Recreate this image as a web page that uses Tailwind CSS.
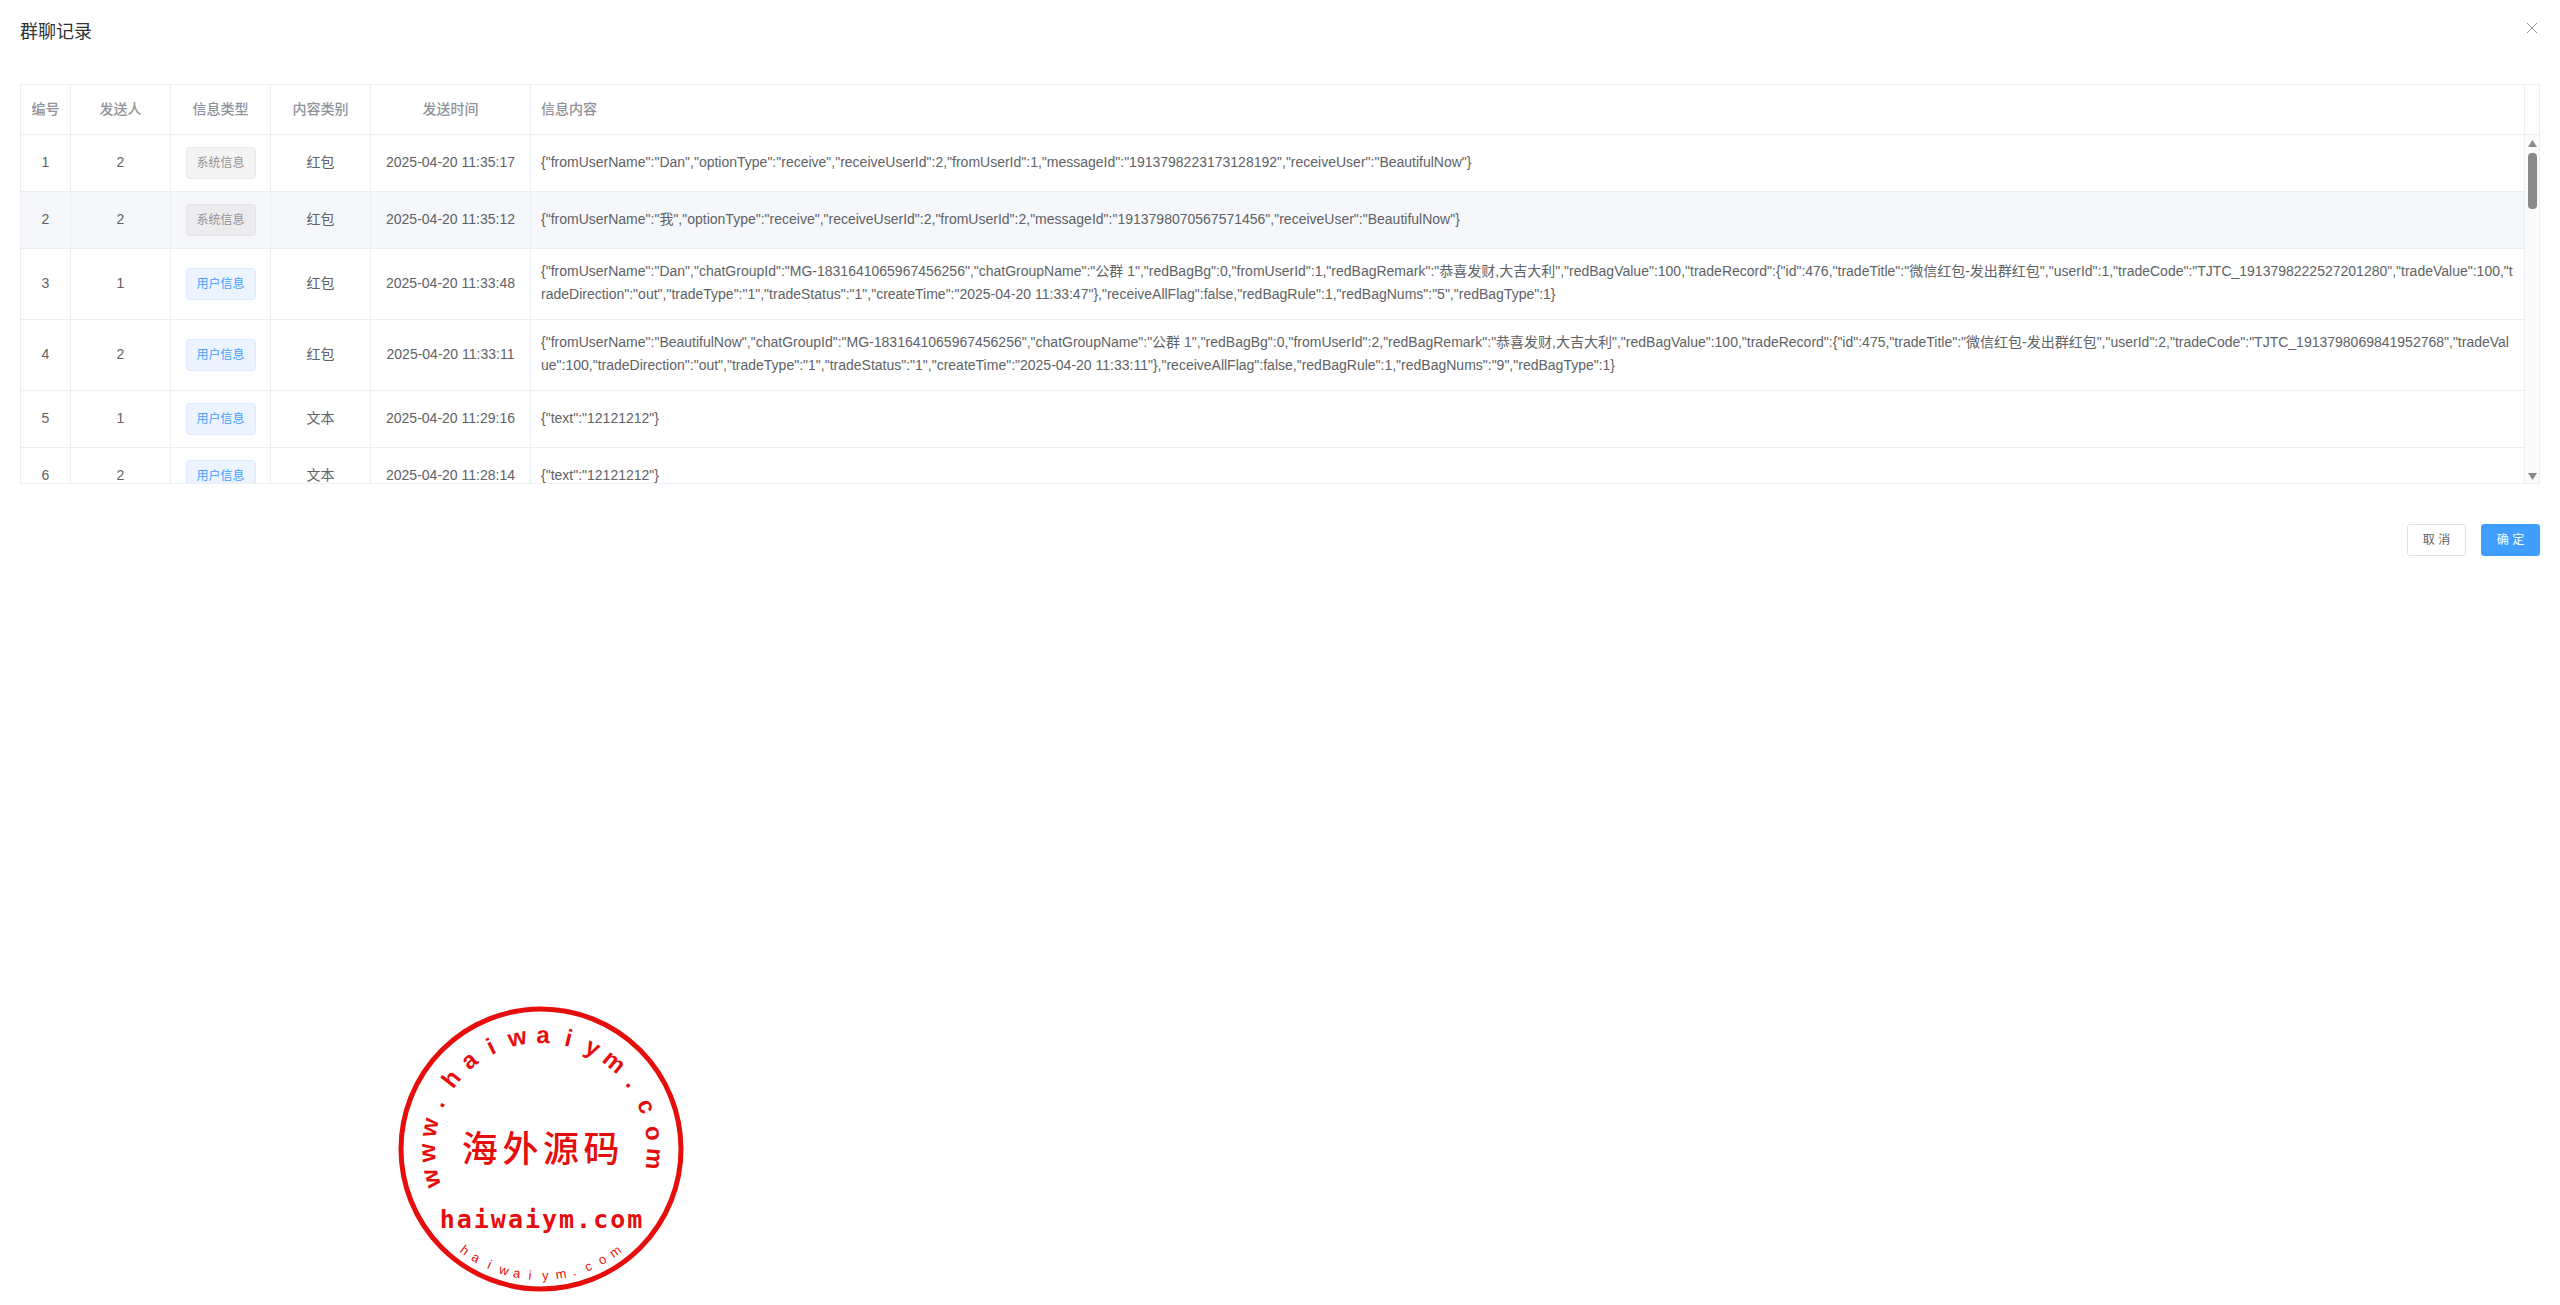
<!DOCTYPE html>
<html lang="zh-CN">
<head>
<meta charset="utf-8">
<title>群聊记录</title>
<script src="https://cdn.jsdelivr.net/npm/@tailwindcss/browser@4"></script>
</head>
<body class="relative h-[1305px] overflow-hidden bg-white text-[14px] text-[#606266] font-['Liberation_Sans','Noto_Sans_CJK_SC',sans-serif]">
  <!-- dialog header -->
  <div class="flex items-center justify-between h-[64px] pl-[20px] pr-[20px]">
    <h2 class="text-[18px] leading-[24px] text-[#303133]">群聊记录</h2>
    <svg class="w-[12px] h-[12px] mt-[-8px] mr-[2px]" viewBox="0 0 12 12" fill="none" stroke="#909399" stroke-width="1"><path d="M1 1 L11 11 M11 1 L1 11"/></svg>
  </div>

  <!-- table -->
  <div class="mt-[20px] mx-[20px] h-[400px] border border-[#ebeef5] overflow-hidden flex">
    <div class="w-[2503px] shrink-0">
      <div class="flex h-[50px] border-b border-[#ebeef5] font-medium text-[#909399] items-stretch">
        <div class="w-[50px] border-r border-[#ebeef5] flex items-center justify-center">编号</div>
        <div class="w-[100px] border-r border-[#ebeef5] flex items-center justify-center">发送人</div>
        <div class="w-[100px] border-r border-[#ebeef5] flex items-center justify-center">信息类型</div>
        <div class="w-[100px] border-r border-[#ebeef5] flex items-center justify-center">内容类别</div>
        <div class="w-[160px] border-r border-[#ebeef5] flex items-center justify-center">发送时间</div>
        <div class="flex-1 flex items-center px-[10px]">信息内容</div>
      </div>

      <div class="flex items-stretch border-b border-[#ebeef5]">
        <div class="w-[50px] border-r border-[#ebeef5] flex items-center justify-center pb-[2px]">1</div>
        <div class="w-[100px] border-r border-[#ebeef5] flex items-center justify-center pb-[2px]">2</div>
        <div class="w-[100px] border-r border-[#ebeef5] flex items-center justify-center py-[12px]"><span class="w-[70px] h-[32px] flex items-center justify-center text-[12px] rounded-[4px] border border-[#e9e9eb] bg-[#f4f4f5] text-[#909399]">系统信息</span></div>
        <div class="w-[100px] border-r border-[#ebeef5] flex items-center justify-center pb-[2px]">红包</div>
        <div class="w-[160px] border-r border-[#ebeef5] flex items-center justify-center pb-[2px]">2025-04-20 11:35:17</div>
        <div class="flex-1 flex items-center px-[10px] pb-[2px] leading-[23px] break-all">{"fromUserName":"Dan","optionType":"receive","receiveUserId":2,"fromUserId":1,"messageId":"1913798223173128192","receiveUser":"BeautifulNow"}</div>
      </div>

      <div class="flex items-stretch border-b border-[#ebeef5] bg-[#f5f7fa]">
        <div class="w-[50px] border-r border-[#ebeef5] flex items-center justify-center pb-[2px]">2</div>
        <div class="w-[100px] border-r border-[#ebeef5] flex items-center justify-center pb-[2px]">2</div>
        <div class="w-[100px] border-r border-[#ebeef5] flex items-center justify-center py-[12px]"><span class="w-[70px] h-[32px] flex items-center justify-center text-[12px] rounded-[4px] border border-[#e4e4e6] bg-[#ececee] text-[#909399]">系统信息</span></div>
        <div class="w-[100px] border-r border-[#ebeef5] flex items-center justify-center pb-[2px]">红包</div>
        <div class="w-[160px] border-r border-[#ebeef5] flex items-center justify-center pb-[2px]">2025-04-20 11:35:12</div>
        <div class="flex-1 flex items-center px-[10px] pb-[2px] leading-[23px] break-all">{"fromUserName":"我","optionType":"receive","receiveUserId":2,"fromUserId":2,"messageId":"1913798070567571456","receiveUser":"BeautifulNow"}</div>
      </div>

      <div class="flex items-stretch border-b border-[#ebeef5]">
        <div class="w-[50px] border-r border-[#ebeef5] flex items-center justify-center pb-[2px]">3</div>
        <div class="w-[100px] border-r border-[#ebeef5] flex items-center justify-center pb-[2px]">1</div>
        <div class="w-[100px] border-r border-[#ebeef5] flex items-center justify-center"><span class="w-[70px] h-[32px] flex items-center justify-center text-[12px] rounded-[4px] border border-[#d9ecff] bg-[#ecf5ff] text-[#409eff]">用户信息</span></div>
        <div class="w-[100px] border-r border-[#ebeef5] flex items-center justify-center pb-[2px]">红包</div>
        <div class="w-[160px] border-r border-[#ebeef5] flex items-center justify-center pb-[2px]">2025-04-20 11:33:48</div>
        <div class="flex-1 flex items-center px-[10px] pt-[11px] pb-[13px] leading-[23px] break-all">{"fromUserName":"Dan","chatGroupId":"MG-1831641065967456256","chatGroupName":"公群 1","redBagBg":0,"fromUserId":1,"redBagRemark":"恭喜发财,大吉大利","redBagValue":100,"tradeRecord":{"id":476,"tradeTitle":"微信红包-发出群红包","userId":1,"tradeCode":"TJTC_1913798222527201280","tradeValue":100,"tradeDirection":"out","tradeType":"1","tradeStatus":"1","createTime":"2025-04-20 11:33:47"},"receiveAllFlag":false,"redBagRule":1,"redBagNums":"5","redBagType":1}</div>
      </div>

      <div class="flex items-stretch border-b border-[#ebeef5]">
        <div class="w-[50px] border-r border-[#ebeef5] flex items-center justify-center pb-[2px]">4</div>
        <div class="w-[100px] border-r border-[#ebeef5] flex items-center justify-center pb-[2px]">2</div>
        <div class="w-[100px] border-r border-[#ebeef5] flex items-center justify-center"><span class="w-[70px] h-[32px] flex items-center justify-center text-[12px] rounded-[4px] border border-[#d9ecff] bg-[#ecf5ff] text-[#409eff]">用户信息</span></div>
        <div class="w-[100px] border-r border-[#ebeef5] flex items-center justify-center pb-[2px]">红包</div>
        <div class="w-[160px] border-r border-[#ebeef5] flex items-center justify-center pb-[2px]">2025-04-20 11:33:11</div>
        <div class="flex-1 flex items-center px-[10px] pt-[11px] pb-[13px] leading-[23px] break-all">{"fromUserName":"BeautifulNow","chatGroupId":"MG-1831641065967456256","chatGroupName":"公群 1","redBagBg":0,"fromUserId":2,"redBagRemark":"恭喜发财,大吉大利","redBagValue":100,"tradeRecord":{"id":475,"tradeTitle":"微信红包-发出群红包","userId":2,"tradeCode":"TJTC_1913798069841952768","tradeValue":100,"tradeDirection":"out","tradeType":"1","tradeStatus":"1","createTime":"2025-04-20 11:33:11"},"receiveAllFlag":false,"redBagRule":1,"redBagNums":"9","redBagType":1}</div>
      </div>

      <div class="flex items-stretch border-b border-[#ebeef5]">
        <div class="w-[50px] border-r border-[#ebeef5] flex items-center justify-center pb-[2px]">5</div>
        <div class="w-[100px] border-r border-[#ebeef5] flex items-center justify-center pb-[2px]">1</div>
        <div class="w-[100px] border-r border-[#ebeef5] flex items-center justify-center py-[12px]"><span class="w-[70px] h-[32px] flex items-center justify-center text-[12px] rounded-[4px] border border-[#d9ecff] bg-[#ecf5ff] text-[#409eff]">用户信息</span></div>
        <div class="w-[100px] border-r border-[#ebeef5] flex items-center justify-center pb-[2px]">文本</div>
        <div class="w-[160px] border-r border-[#ebeef5] flex items-center justify-center pb-[2px]">2025-04-20 11:29:16</div>
        <div class="flex-1 flex items-center px-[10px] pb-[2px] leading-[23px] break-all">{"text":"12121212"}</div>
      </div>

      <div class="flex items-stretch border-b border-[#ebeef5]">
        <div class="w-[50px] border-r border-[#ebeef5] flex items-center justify-center pb-[2px]">6</div>
        <div class="w-[100px] border-r border-[#ebeef5] flex items-center justify-center pb-[2px]">2</div>
        <div class="w-[100px] border-r border-[#ebeef5] flex items-center justify-center py-[12px]"><span class="w-[70px] h-[32px] flex items-center justify-center text-[12px] rounded-[4px] border border-[#d9ecff] bg-[#ecf5ff] text-[#409eff]">用户信息</span></div>
        <div class="w-[100px] border-r border-[#ebeef5] flex items-center justify-center pb-[2px]">文本</div>
        <div class="w-[160px] border-r border-[#ebeef5] flex items-center justify-center pb-[2px]">2025-04-20 11:28:14</div>
        <div class="flex-1 flex items-center px-[10px] pb-[2px] leading-[23px] break-all">{"text":"12121212"}</div>
      </div>
    </div>

    <!-- scrollbar gutter -->
    <div class="w-[15px] shrink-0 border-l border-[#ebeef5] flex flex-col">
      <div class="h-[50px] shrink-0 border-b border-[#ebeef5]"></div>
      <div class="flex-1 bg-[#fafafa] flex flex-col items-center pt-[5px] pb-[3px]">
        <svg class="w-[9px] h-[7px] shrink-0" viewBox="0 0 9 7" fill="#8a8a8a"><path d="M4.5 0 L9 7 L0 7 Z"/></svg>
        <div class="w-[9px] h-[56px] mt-[6px] rounded-[4px] bg-[#8a8a8a]"></div>
        <svg class="w-[9px] h-[7px] shrink-0 mt-auto" viewBox="0 0 9 7" fill="#8a8a8a"><path d="M0 0 L9 0 L4.5 7 Z"/></svg>
      </div>
    </div>
  </div>

  <!-- dialog footer -->
  <div class="flex justify-end gap-[15px] mt-[40px] mx-[20px] text-[12px]">
    <button class="w-[59px] h-[32px] rounded-[3px] border border-[#dcdfe6] bg-white text-[#606266]">取 消</button>
    <button class="w-[59px] h-[32px] rounded-[3px] border border-[#409eff] bg-[#409eff] text-white">确 定</button>
  </div>

  <!-- stamp overlay, origin at the circle centre -->
  <svg class="absolute left-[396px] top-[1005px] w-[290px] h-[290px]" viewBox="-145 -144 290 290" fill="#e60d0d">
    <circle cx="0" cy="0" r="140" fill="none" stroke="#e60d0d" stroke-width="5"/>
    <g font-family="'Liberation Sans',sans-serif" font-weight="700" font-size="24" text-anchor="middle">
      <text y="-106" transform="rotate(-105)">w</text>
      <text y="-106" transform="rotate(-92)">w</text>
      <text y="-106" transform="rotate(-79)">w</text>
      <text y="-106" transform="rotate(-66)">.</text>
      <text y="-106" transform="rotate(-52)">h</text>
      <text y="-106" transform="rotate(-39)">a</text>
      <text y="-106" transform="rotate(-26)">i</text>
      <text y="-106" transform="rotate(-12)">w</text>
      <text y="-106" transform="rotate(1)">a</text>
      <text y="-106" transform="rotate(14)">i</text>
      <text y="-106" transform="rotate(27)">y</text>
      <text y="-106" transform="rotate(40)">m</text>
      <text y="-106" transform="rotate(54)">.</text>
      <text y="-106" transform="rotate(68)">c</text>
      <text y="-106" transform="rotate(82)">o</text>
      <text y="-106" transform="rotate(95)">m</text>
    </g>
    <text x="2" y="13" text-anchor="middle" font-family="'Noto Sans CJK SC',sans-serif" font-weight="500" font-size="36" letter-spacing="4.6">海外源码</text>
    <text x="1" y="79" text-anchor="middle" font-family="'DejaVu Sans Mono',monospace" font-weight="700" font-size="25" letter-spacing="2">haiwaiym.com</text>
    <g font-family="'Liberation Sans',sans-serif" font-size="13" text-anchor="middle">
      <text y="131" transform="rotate(37)">h</text>
      <text y="131" transform="rotate(31)">a</text>
      <text y="131" transform="rotate(24)">i</text>
      <text y="131" transform="rotate(17)">w</text>
      <text y="131" transform="rotate(11)">a</text>
      <text y="131" transform="rotate(5)">i</text>
      <text y="131" transform="rotate(-2)">y</text>
      <text y="131" transform="rotate(-9)">m</text>
      <text y="131" transform="rotate(-15)">.</text>
      <text y="131" transform="rotate(-22)">c</text>
      <text y="131" transform="rotate(-29)">o</text>
      <text y="131" transform="rotate(-36)">m</text>
    </g>
  </svg>
</body>
</html>
